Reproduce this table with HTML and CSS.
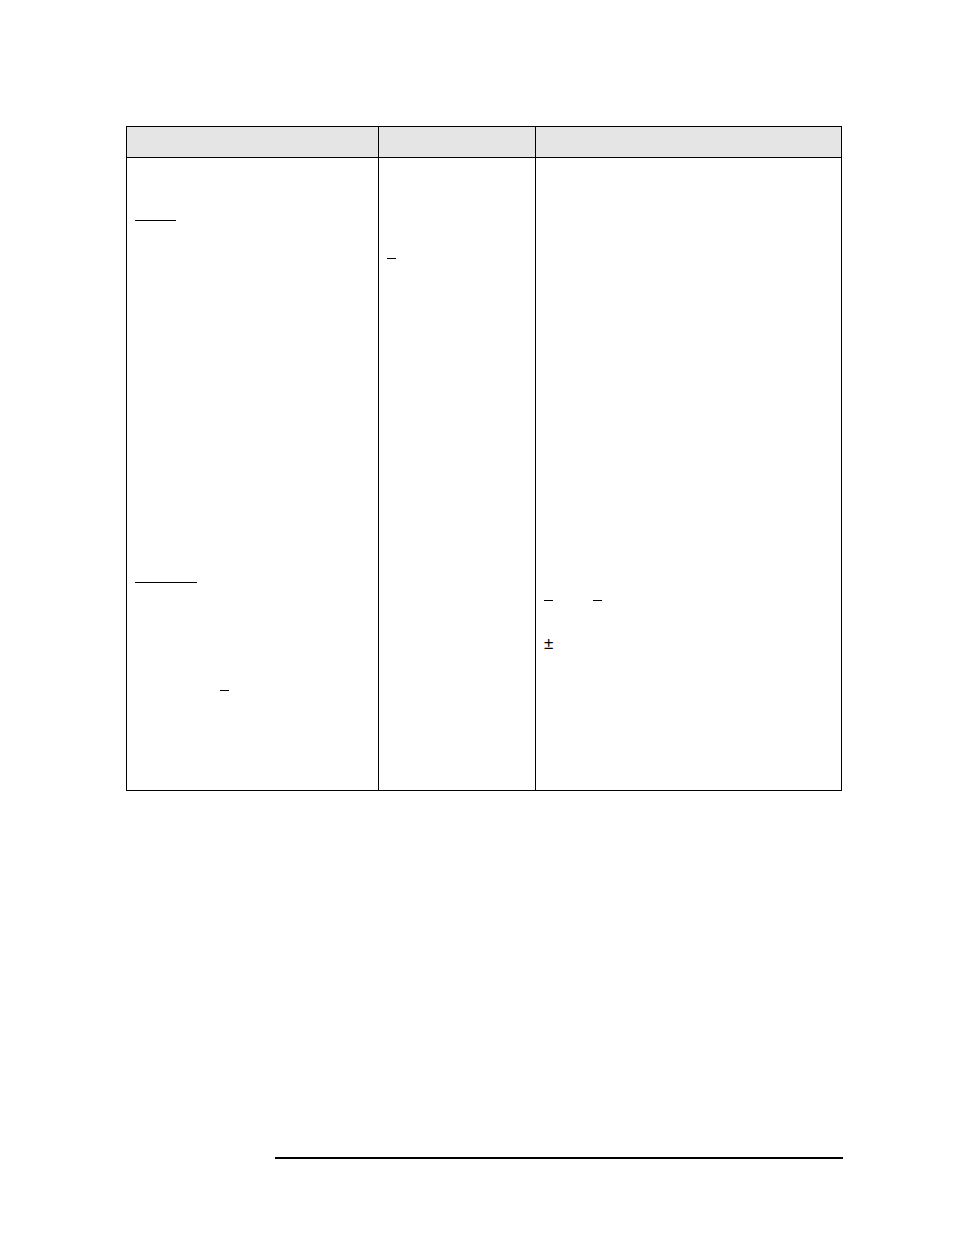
FILE: index.html
```html
<!DOCTYPE html>
<html>
<head>
<meta charset="utf-8">
<link rel="stylesheet" href="styles.css">
</head>
<body>
<div class="page">
  <table class="spec">
    <colgroup>
      <col class="c1">
      <col class="c2">
      <col class="c3">
    </colgroup>
    <thead>
      <tr><th></th><th></th><th></th></tr>
    </thead>
    <tbody>
      <tr>
        <td class="cell">
          <div class="mark u-a"></div>
          <div class="mark u-b"></div>
          <div class="mark dash d-c"></div>
        </td>
        <td class="cell">
          <div class="mark dash d-a"></div>
        </td>
        <td class="cell">
          <div class="dash-row">
            <span class="mark dash"></span>
            <span class="mark dash"></span>
          </div>
          <div class="pm">±</div>
        </td>
      </tr>
    </tbody>
  </table>
  <div class="footer-rule"></div>
</div>
</body>
</html>
```
FILE: styles.css
```css
html, body {
  margin: 0;
  padding: 0;
  background: #ffffff;
}
body {
  font-family: "Liberation Sans", Arial, sans-serif;
  color: #000;
}
.page {
  width: 954px;
  height: 1235px;
  padding-top: 126px;
  box-sizing: border-box;
}
.spec {
  margin-left: 126px;
  width: 715px;
  table-layout: fixed;
  border-collapse: collapse;
}
.c1 { width: 252px; }
.c2 { width: 157px; }
.c3 { width: 306px; }
.spec th,
.spec td {
  border: 1px solid #000;
  padding: 0;
}
.spec th {
  background: #e5e5e5;
  height: 30px;
}
.spec td {
  height: 632px;
  vertical-align: top;
}
.cell {
  padding-left: 8px !important;
}
.mark {
  height: 0;
  border-bottom: 1px solid #000;
}
.u-a {
  width: 41px;
  margin-top: 62px;
}
.u-b {
  width: 62px;
  margin-top: 361px;
}
.dash {
  width: 9px;
}
.d-c {
  margin-top: 107px;
  margin-left: 85px;
}
.d-a {
  margin-top: 100px;
}
.dash-row {
  display: flex;
  gap: 40px;
  margin-top: 442px;
}
.pm {
  margin-top: 34px;
  font-size: 17px;
  line-height: 18px;
}
.footer-rule {
  margin-left: 275px;
  margin-top: 366px;
  width: 568px;
  height: 2px;
  background: #000;
}
```
